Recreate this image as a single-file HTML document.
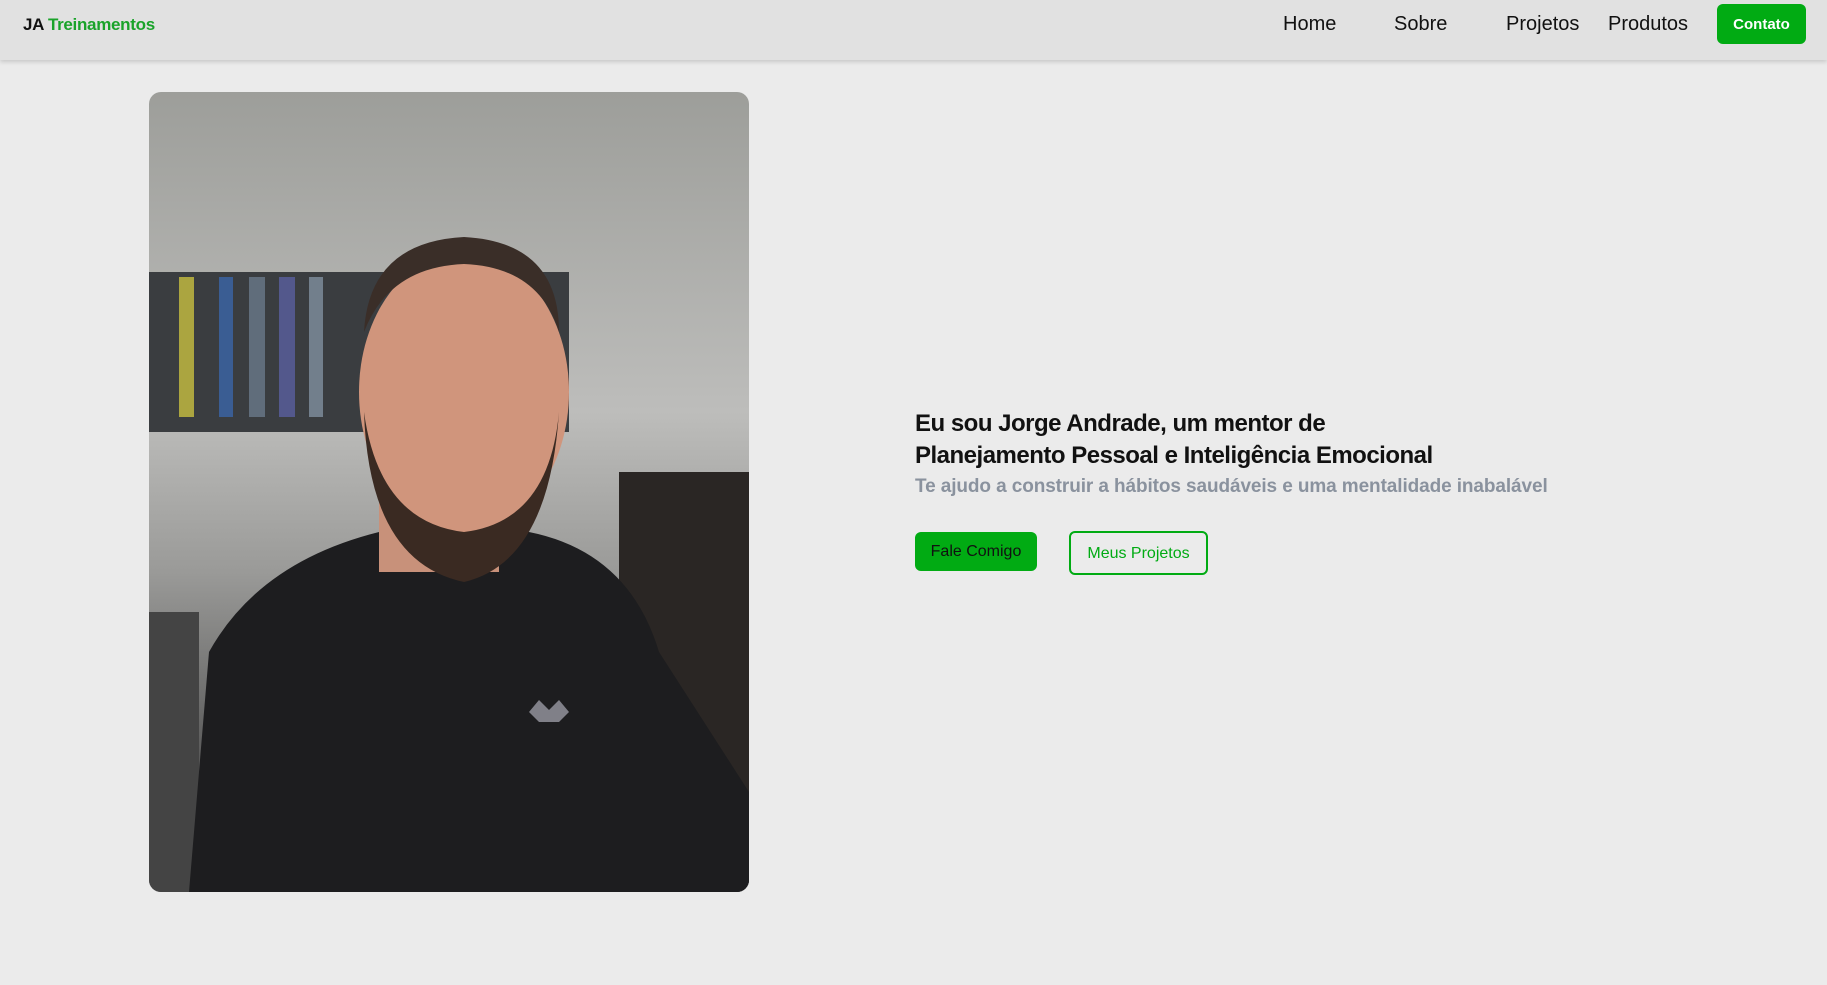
<!DOCTYPE html>
<html><head><meta charset="utf-8"><style>
*{margin:0;padding:0;box-sizing:border-box}
body{width:1827px;height:985px;background:#ebebeb;font-family:"Liberation Sans",sans-serif;position:relative;overflow:hidden}
.nav{position:absolute;left:0;top:0;width:1827px;height:60px;background:#e1e1e1;box-shadow:0 2px 4px rgba(0,0,0,.15)}
.logo{position:absolute;left:23px;top:15px;font-size:17px;color:#111;font-weight:bold;letter-spacing:-0.3px}
.logo span{color:#1aa32a}
.nl{position:absolute;top:13px;font-size:20px;color:#111}
.contato{position:absolute;left:1717px;top:4px;width:89px;height:40px;background:#01ab13;border-radius:6px;color:#fff;font-weight:bold;font-size:15px;text-align:center;line-height:42px}
.photo{position:absolute;left:149px;top:92px;width:600px;height:800px;border-radius:12px;overflow:hidden;background:linear-gradient(#9d9e9a,#bdbdbb 40%,#9a9a98 60%,#555 85%)}
h1{position:absolute;left:915px;top:408px;font-size:24px;line-height:32px;font-weight:bold;color:#111;letter-spacing:-0.5px}
.sub{position:absolute;left:915px;top:476px;font-size:19px;font-weight:bold;color:#8a929e;letter-spacing:-0.1px}
.b1{position:absolute;left:915px;top:532px;width:122px;height:39px;background:#01ab13;border-radius:6px;font-size:16px;color:#111;text-align:center;line-height:40px}
.b2{position:absolute;left:1069px;top:531px;width:139px;height:44px;border:2px solid #01ab13;border-radius:6px;font-size:16px;color:#01ab13;text-align:center;line-height:42px}
</style></head><body>
<div class="nav">
<div class="logo">JA <span>Treinamentos</span></div>
<div class="nl" style="left:1283px">Home</div>
<div class="nl" style="left:1394px">Sobre</div>
<div class="nl" style="left:1506px">Projetos</div>
<div class="nl" style="left:1608px">Produtos</div>
<div class="contato">Contato</div>
</div>
<div class="photo">
<svg width="600" height="800" viewBox="0 0 600 800">
<rect x="0" y="180" width="420" height="160" fill="#3a3d40"/>
<g opacity=".8"><rect x="30" y="185" width="15" height="140" fill="#c8c040"/><rect x="70" y="185" width="14" height="140" fill="#3a66a8"/><rect x="100" y="185" width="16" height="140" fill="#6a7a8a"/><rect x="130" y="185" width="16" height="140" fill="#5a5fa0"/><rect x="160" y="185" width="14" height="140" fill="#8090a0"/></g>
<rect x="470" y="380" width="130" height="420" fill="#2a2624"/>
<rect x="0" y="520" width="50" height="280" fill="#444"/>
<path d="M40 800 L60 560 Q110 470 230 440 L380 440 Q480 460 510 560 L600 700 L600 800 Z" fill="#1d1d1f"/>
<rect x="230" y="380" width="120" height="100" fill="#c8917a"/>
<ellipse cx="315" cy="300" rx="105" ry="140" fill="#d0957c"/>
<path d="M215 320 Q220 470 315 490 Q400 470 410 320 Q400 430 315 440 Q230 430 215 320Z" fill="#3a2a22"/>
<path d="M215 240 Q220 150 315 145 Q410 150 410 240 Q390 175 315 172 Q240 175 215 240Z" fill="#3a2e28"/>
<path d="M380 620 l10 -12 l10 10 l10 -10 l10 12 l-10 10 l-20 0 z" fill="#808088"/>
</svg>
</div>
<h1>Eu sou Jorge Andrade, um mentor de<br>Planejamento Pessoal e Inteligência Emocional</h1>
<div class="sub">Te ajudo a construir a hábitos saudáveis e uma mentalidade inabalável</div>
<div class="b1">Fale Comigo</div>
<div class="b2">Meus Projetos</div>
</body></html>
